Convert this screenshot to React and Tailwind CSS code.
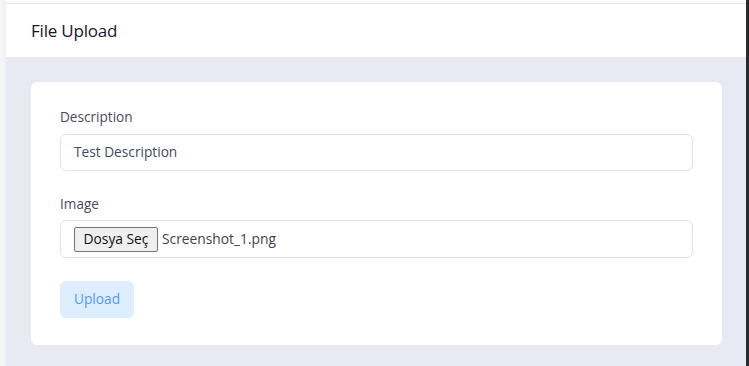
import React from 'react';

export default function App() {
  return (
    <div className="flex h-[366px] w-[749px] overflow-hidden bg-white font-['Open_Sans',sans-serif]">
      {/* left shadow strip */}
      <div className="w-[6px] bg-gradient-to-r from-[#f7f7f7] to-[#f1f1f3]" />

      <div className="flex flex-1 flex-col">
        {/* Header */}
        <div className="h-[4px] border-b border-[#e8e8e8] bg-white" />
        <header className="flex h-[53px] items-center bg-white pl-[25px]">
          <h1 className="text-[17px] font-medium leading-[24px] tracking-[-0.2px] text-[#161630]">File Upload</h1>
        </header>

        {/* Content */}
        <main className="flex-1 bg-[#e9e9f3] pl-[25px] pr-[24px] pt-[25px]">
          <div className="rounded-[6px] bg-white px-[29px] pb-[27px] pt-[25px]">
            <div className="mb-[23px]">
              <label className="mb-[7px] block text-[13.6px] leading-[20px] text-[#4b4b5a]">Description</label>
              <div className="flex h-[37px] items-center rounded-[6px] border border-[#e1e1ee] px-[13px] text-[13.7px] text-[#3f4a60]">
                Test Description
              </div>
            </div>

            <div className="mb-[23px]">
              <label className="mb-[6px] block text-[13.6px] leading-[20px] text-[#4b4b5a]">Image</label>
              <div className="flex h-[38px] items-center gap-[4px] rounded-[6px] border border-[#e1e1ee] px-[13px] text-[13.8px] text-[#3f3f4f]">
                <span className="flex h-[25px] w-[84px] items-center justify-center rounded-[2px] border border-[#767676] bg-[#efefef] text-[#111]">
                  Dosya Seç
                </span>
                <span>Screenshot_1.png</span>
              </div>
            </div>

            <button className="h-[37px] w-[74px] rounded-[6px] bg-[#ddeefe] text-[13.7px] font-medium text-[#5597f3]">
              Upload
            </button>
          </div>
        </main>
      </div>

      {/* right dark edge */}
      <div className="w-[3px] bg-[#2a2a2a]" />
    </div>
  );
}
